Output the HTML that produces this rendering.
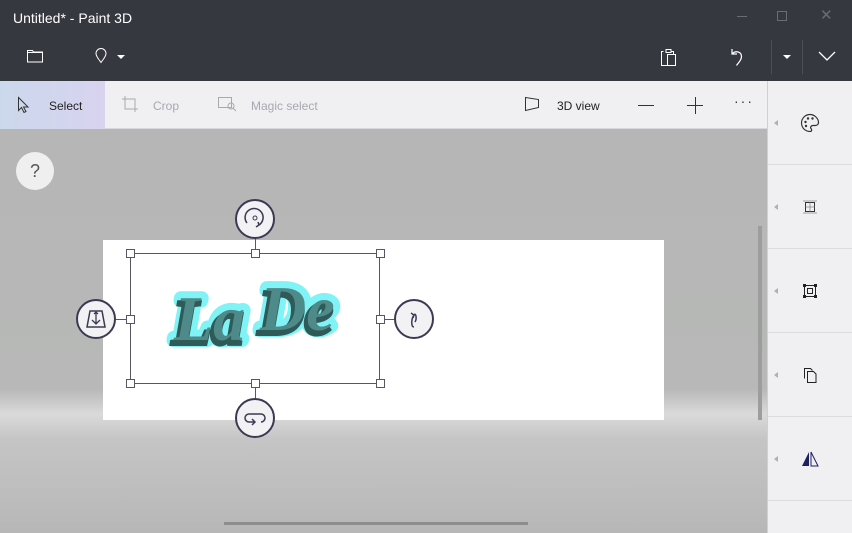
<!DOCTYPE html>
<html><head><style>
*{margin:0;padding:0;box-sizing:border-box}
body{width:852px;height:533px;overflow:hidden;font-family:"Liberation Sans",sans-serif;position:relative;background:#b6b7b6}
.abs{position:absolute}
.title{left:0;top:0;width:852px;height:81px;background:#363840;color:#fff}
.tb{left:0;top:81px;width:767px;height:48px;background:#f0f0f2;border-bottom:1px solid #d8d8dc}
.tb div{font-size:12px}
.panel{left:767px;top:81px;width:85px;height:452px;background:#f0f0f2;border-left:1px solid #d0d0d4}
.sep{position:absolute;left:0;width:85px;height:1px;background:#dcdce0}
.tri{position:absolute;left:6px;width:0;height:0;border-top:3px solid transparent;border-bottom:3px solid transparent;border-right:4px solid #b0b0b4}
.canvas{left:0;top:129px;width:767px;height:404px;background:linear-gradient(#b5b6b5 0,#b7b8b7 260px,#d9dad9 285px,#c4c5c4 310px,#b6b7b6 404px)}
.h{position:absolute;width:9px;height:9px;background:#fff;border:1px solid #555766}
.circ{position:absolute;width:40px;height:40px;border-radius:50%;background:#f2f2f5;border:2px solid #3a3a52}
</style></head><body>
<div class="abs title">
 <div class="abs" style="left:13px;top:10px;font-size:14px">Untitled* - Paint 3D</div>
 <div class="abs" style="left:737px;top:16px;width:10px;height:1px;background:#6a6c74"></div>
 <div class="abs" style="left:777px;top:11px;width:10px;height:10px;border:1px solid #6a6c74"></div>
 <div class="abs" style="left:820px;top:6px;color:#6a6c74;font-size:15px">✕</div>
 <svg class="abs" style="left:26px;top:48px" width="18" height="16"><path d="M1.5 2.5h5l1 1.5h9v10h-15z M1.5 4.5h15" fill="none" stroke="#fff" stroke-width="1"/></svg>
 <svg class="abs" style="left:94px;top:47px" width="14" height="18"><path d="M7 1.5a5 5 0 0 1 5 5c0 3-3 6-5 9c-2-3-5-6-5-9a5 5 0 0 1 5-5z" fill="none" stroke="#fff"/></svg>
 <div class="abs" style="left:117px;top:55px;border-left:4px solid transparent;border-right:4px solid transparent;border-top:4px solid #fff"></div>
 <svg class="abs" style="left:660px;top:47px" width="18" height="20"><path d="M3.5 4.5h-2v14h6 M6 2.5h5v3h-5z M11.5 4.5h2v3 M7.5 7.5h8v11h-8z" fill="none" stroke="#fff"/></svg>
 <svg class="abs" style="left:728px;top:47px" width="18" height="20"><path d="M4 2v5h5 M4.5 6.5c3-3 9-2 9 3c0 3-2 5-5 9" fill="none" stroke="#fff" stroke-width="1.2"/></svg>
 <div class="abs" style="left:771px;top:40px;width:1px;height:34px;background:#4d4f58"></div>
 <div class="abs" style="left:783px;top:55px;border-left:4px solid transparent;border-right:4px solid transparent;border-top:4px solid #fff"></div>
 <div class="abs" style="left:802px;top:40px;width:1px;height:34px;background:#4d4f58"></div>
 <svg class="abs" style="left:818px;top:50px" width="18" height="12"><path d="M1 2l8 8l8-8" fill="none" stroke="#fff" stroke-width="1.3"/></svg>
</div>
<div class="abs tb">
 <div class="abs" style="left:0;top:0;width:105px;height:48px;background:linear-gradient(90deg,#cbd8ec,#d8d3ef)"></div>
 <svg class="abs" style="left:17px;top:15px" width="14" height="18"><path d="M1.5 1.5v13l3-3l2.5 5l2-1l-2.5-4.5h4.5z" fill="none" stroke="#333"/></svg>
 <div class="abs" style="left:49px;top:18px;color:#222">Select</div>
 <svg class="abs" style="left:121px;top:14px" width="18" height="18"><path d="M4 1v13h13 M1 4h13v13" fill="none" stroke="#a8a8b0"/></svg>
 <div class="abs" style="left:153px;top:18px;color:#a8a8b0">Crop</div>
 <svg class="abs" style="left:217px;top:15px" width="20" height="16"><rect x="1.5" y="1.5" width="13" height="10" fill="none" stroke="#a8a8b0"/><circle cx="14" cy="10" r="3" fill="none" stroke="#a8a8b0"/><path d="M16 12l3 3" stroke="#a8a8b0"/></svg>
 <div class="abs" style="left:251px;top:18px;color:#a8a8b0">Magic select</div>
 <svg class="abs" style="left:524px;top:15px" width="18" height="16"><path d="M1.5 1.5l13 2v8l-13 3z" fill="none" stroke="#333"/></svg>
 <div class="abs" style="left:557px;top:18px;color:#222">3D view</div>
 <div class="abs" style="left:638px;top:24px;width:16px;height:1px;background:#333"></div>
 <div class="abs" style="left:687px;top:24px;width:16px;height:1px;background:#333"></div>
 <div class="abs" style="left:695px;top:16px;width:1px;height:17px;background:#333"></div>
 <div class="abs" style="left:734px;top:12px;font-size:14px;color:#333;letter-spacing:2px">···</div>
</div>
<div class="abs canvas">
 <div class="abs" style="left:16px;top:23px;width:38px;height:38px;border-radius:50%;background:#efefef;text-align:center;line-height:38px;font-size:18px;color:#555">?</div>
 <div class="abs" style="left:103px;top:111px;width:561px;height:180px;background:#fff"></div>
 <div class="abs" style="left:758px;top:97px;width:4px;height:194px;background:#9c9d9c"></div>
 <div class="abs" style="left:224px;top:393px;width:304px;height:3px;background:#8c8d8c"></div>
</div>
<div class="abs" style="left:130px;top:253px;width:250px;height:131px;border:1px solid #555766"></div>
<div class="abs" style="left:255px;top:237px;width:1px;height:16px;background:#555766"></div>
<div class="abs" style="left:255px;top:384px;width:1px;height:14px;background:#555766"></div>
<div class="abs" style="left:116px;top:319px;width:14px;height:1px;background:#555766"></div>
<div class="abs" style="left:380px;top:319px;width:14px;height:1px;background:#555766"></div>
<div class="h" style="left:126px;top:249px"></div><div class="h" style="left:251px;top:249px"></div><div class="h" style="left:376px;top:249px"></div>
<div class="h" style="left:126px;top:315px"></div><div class="h" style="left:376px;top:315px"></div>
<div class="h" style="left:126px;top:379px"></div><div class="h" style="left:251px;top:379px"></div><div class="h" style="left:376px;top:379px"></div>
<div class="circ" style="left:235px;top:199px"><svg width="36" height="36"><path d="M10 22a9 9 0 1 1 12 2" fill="none" stroke="#3a3a52" stroke-width="1.5"/><circle cx="18" cy="17" r="2" fill="none" stroke="#3a3a52"/><path d="M19 26l3-2l-1-3" fill="none" stroke="#3a3a52" stroke-width="1.5"/></svg></div>
<div class="circ" style="left:235px;top:398px"><svg width="36" height="36"><path d="M17 22h-5a4 4 0 0 1 0-8h12a4 4 0 0 1 0 8" fill="none" stroke="#3a3a52" stroke-width="1.5"/><path d="M15 19l3 3l-3 3" fill="none" stroke="#3a3a52" stroke-width="1.5"/></svg></div>
<div class="circ" style="left:76px;top:299px"><svg width="36" height="36"><path d="M12 10h12l3 16h-18z" fill="none" stroke="#3a3a52" stroke-width="1.5"/><path d="M18 12v11 M14 19l4 4l4-4 M16 13l2-2l2 2" fill="none" stroke="#3a3a52" stroke-width="1.3"/></svg></div>
<div class="circ" style="left:394px;top:299px"><svg width="36" height="36"><path d="M18 26c-3 0-3-8 0-12c2-3 3 4 1 7" fill="none" stroke="#3a3a52" stroke-width="1.5"/><path d="M15 12l3 2l-1 3" fill="none" stroke="#3a3a52" stroke-width="1.4"/></svg></div>
<svg class="abs" style="left:160px;top:268px" width="200" height="100">
 <g font-family="Liberation Serif,serif" font-style="italic" font-weight="bold" font-size="64">
  <text x="14" y="72" fill="#7ff3f5" stroke="#7ff3f5" stroke-width="14" stroke-linejoin="round">La</text>
  <text x="100" y="62" fill="#7ff3f5" stroke="#7ff3f5" stroke-width="14" stroke-linejoin="round">De</text>
  <text x="12" y="76" fill="#2f5a58" stroke="#2f5a58" stroke-width="4">La</text>
  <text x="98" y="66" fill="#2f5a58" stroke="#2f5a58" stroke-width="4">De</text>
  <text x="14" y="72" fill="#4e8a89">La</text>
  <text x="100" y="62" fill="#4e8a89">De</text>
 </g>
</svg>
<div class="abs panel">
 <div class="sep" style="top:83px"></div><div class="sep" style="top:167px"></div><div class="sep" style="top:251px"></div><div class="sep" style="top:335px"></div><div class="sep" style="top:419px"></div>
 <div class="tri" style="top:39px"></div><div class="tri" style="top:123px"></div><div class="tri" style="top:207px"></div><div class="tri" style="top:291px"></div><div class="tri" style="top:375px"></div>
 <svg class="abs" style="left:32px;top:32px" width="20" height="20"><path d="M10 1.5a8.5 8.5 0 1 0 0 17c2 0 2-2 1-3c-1-1 0-3 2-3h2.5a3 3 0 0 0 3-3c0-4-4-8-8.5-8z" fill="none" stroke="#333" stroke-width="1.2"/><circle cx="5.5" cy="9" r="1.2" fill="#333"/><circle cx="8" cy="5.5" r="1.2" fill="#333"/><circle cx="12.5" cy="5.5" r="1.2" fill="#333"/><circle cx="6" cy="13" r="1.2" fill="#333"/></svg>
 <svg class="abs" style="left:33px;top:117px" width="18" height="18"><rect x="4.5" y="4.5" width="9" height="9" fill="none" stroke="#333"/><path d="M9 4.5v9 M4.5 9h9 M2 3h14 M2 15h14" stroke="#888" stroke-width="0.8"/></svg>
 <svg class="abs" style="left:33px;top:201px" width="18" height="18"><rect x="3.5" y="3.5" width="11" height="11" fill="none" stroke="#222"/><rect x="6.5" y="6.5" width="5" height="5" fill="none" stroke="#222"/><rect x="2" y="2" width="3" height="3" fill="#222"/><rect x="13" y="2" width="3" height="3" fill="#222"/><rect x="2" y="13" width="3" height="3" fill="#222"/><rect x="13" y="13" width="3" height="3" fill="#222"/></svg>
 <svg class="abs" style="left:33px;top:285px" width="18" height="18"><path d="M3.5 12.5v-10h6l2 2 M6.5 5.5h6l2.5 2.5v8.5h-8.5z" fill="none" stroke="#222"/></svg>
 <svg class="abs" style="left:32px;top:369px" width="20" height="18"><path d="M9 2v14h-7z" fill="#1e2060"/><path d="M11 2v14h7z" fill="none" stroke="#1e2060"/></svg>
</div>
</body></html>
